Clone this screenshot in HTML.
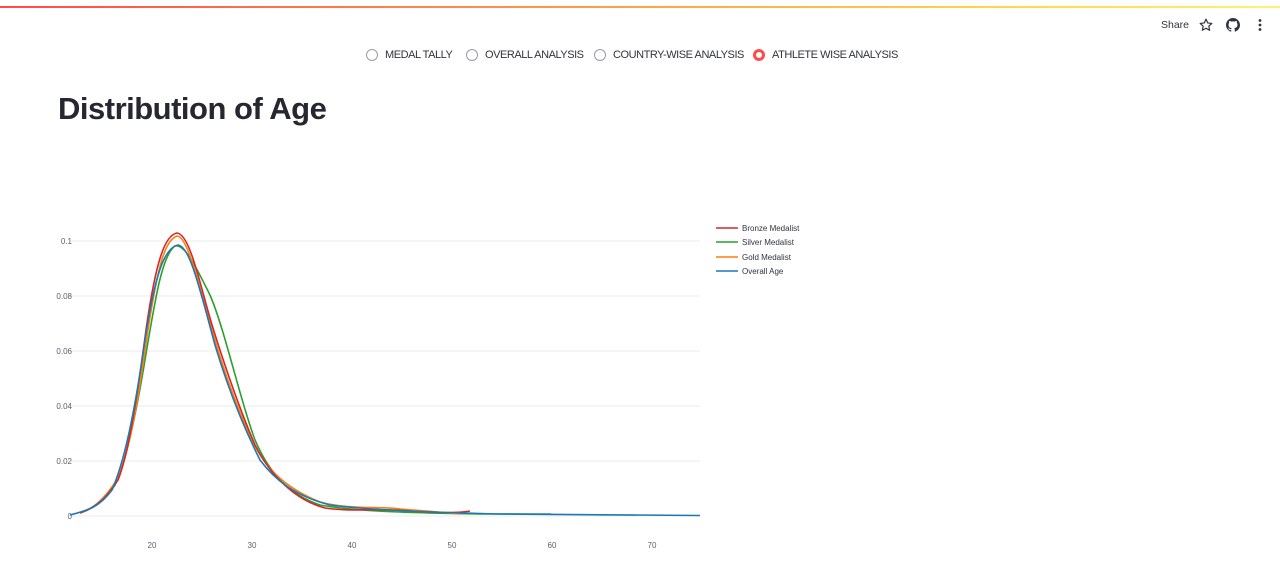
<!DOCTYPE html>
<html><head><meta charset="utf-8"><style>
body{margin:0;width:1280px;height:572px;background:#fff;font-family:"Liberation Sans",sans-serif;position:relative;overflow:hidden;color:#31333f}
.bar{position:absolute;top:6px;left:0;width:1280px;height:2px;background:linear-gradient(90deg,#ff4b4b,#ffd84b 80%,#fff176)}
.r{position:absolute;top:49px;font-size:11px;letter-spacing:-0.45px;display:flex;align-items:center;white-space:nowrap;color:#31333f}
.c{width:12px;height:12px;border:1px solid #9a9ca4;border-radius:50%;margin-right:7px;box-sizing:border-box}
.c.on{border:3.5px solid #ff4b4b;background:#fff}
h1{position:absolute;top:91px;left:58px;margin:0;font-size:31px;font-weight:bold;color:#262730;letter-spacing:-0.5px}
.tr{position:absolute;top:19px;font-size:10.5px;color:#31333f}
</style></head><body>
<div class="bar"></div>
<div class="tr" style="left:1161px">Share</div>
<svg style="position:absolute;left:1199px;top:18px" width="14" height="14" viewBox="0 0 24 24"><path d="M12 2l3 6.5 7 .8-5.2 4.8 1.5 7L12 17.6 5.7 21l1.5-7L2 9.3l7-.8z" fill="none" stroke="#31333f" stroke-width="2" stroke-linejoin="round"/></svg>
<svg style="position:absolute;left:1226px;top:18px" width="14" height="14" viewBox="0 0 16 16"><path fill="#31333f" d="M8 0C3.6 0 0 3.6 0 8c0 3.5 2.3 6.5 5.5 7.6.4.1.5-.2.5-.4v-1.4c-2.2.5-2.7-1-2.7-1-.4-.9-.9-1.2-.9-1.2-.7-.5.1-.5.1-.5.8.1 1.2.8 1.2.8.7 1.2 1.9.9 2.3.7.1-.5.3-.9.5-1.1-1.8-.2-3.6-.9-3.6-4 0-.9.3-1.6.8-2.1-.1-.2-.4-1 .1-2.1 0 0 .7-.2 2.2.8.6-.2 1.3-.3 2-.3s1.4.1 2 .3c1.5-1 2.2-.8 2.2-.8.4 1.1.2 1.9.1 2.1.5.6.8 1.3.8 2.1 0 3.1-1.9 3.7-3.6 3.9.3.3.5.8.5 1.5v2.2c0 .2.1.5.6.4C13.7 14.5 16 11.5 16 8c0-4.4-3.6-8-8-8z"/></svg>
<svg style="position:absolute;left:1257px;top:18px" width="6" height="14"><circle cx="3" cy="2.5" r="1.4" fill="#31333f"/><circle cx="3" cy="7" r="1.4" fill="#31333f"/><circle cx="3" cy="11.5" r="1.4" fill="#31333f"/></svg>
<div class="r" style="left:366px"><div class="c"></div>MEDAL TALLY</div>
<div class="r" style="left:466px"><div class="c"></div>OVERALL ANALYSIS</div>
<div class="r" style="left:594px"><div class="c"></div>COUNTRY-WISE ANALYSIS</div>
<div class="r" style="left:753px"><div class="c on"></div>ATHLETE WISE ANALYSIS</div>
<h1>Distribution of Age</h1>
<svg style="position:absolute;left:0;top:0" width="1280" height="572" font-family="Liberation Sans, sans-serif" font-size="8" fill="#5c6070">
<g stroke="#ebebeb" stroke-width="1">
<line x1="70" x2="700" y1="241" y2="241"/><line x1="70" x2="700" y1="296" y2="296"/><line x1="70" x2="700" y1="351" y2="351"/><line x1="70" x2="700" y1="406" y2="406"/><line x1="70" x2="700" y1="461" y2="461"/><line x1="70" x2="700" y1="516" y2="516"/>
</g>
<g text-anchor="end"><text x="72" y="244">0.1</text><text x="72" y="299">0.08</text><text x="72" y="354">0.06</text><text x="72" y="409">0.04</text><text x="72" y="464">0.02</text><text x="72" y="519">0</text></g>
<g text-anchor="middle"><text x="152" y="548">20</text><text x="252" y="548">30</text><text x="352" y="548">40</text><text x="452" y="548">50</text><text x="552" y="548">60</text><text x="652" y="548">70</text></g>
<g fill="none" stroke-width="1.6">
<path stroke="#2ca02c" d="M80 513 C95 508 105 500 115 485 C125 465 135 420 145 360 C155 300 162 255 175 246 C185 244 195 265 210 295 C225 330 240 400 255 440 C270 475 290 495 320 505 C360 512 420 513 480 514 C520 514 540 514 551 514"/>
<path stroke="#ff7f0e" d="M80 513 C95 508 105 498 118 478 C130 450 138 400 148 330 C158 265 165 240 177 236 C188 236 200 290 212 330 C225 375 238 410 252 440 C265 468 285 488 320 502 C350 510 380 506 400 509 C430 511 450 513 460 514"/>
<path stroke="#d62728" d="M80 513 C95 508 105 500 118 480 C128 455 136 405 146 330 C156 260 165 235 177 233 C190 234 200 285 212 325 C226 370 240 410 255 445 C270 475 295 500 325 508 C350 512 380 508 410 511 C440 513 460 513 470 511"/>
<path stroke="#1f77b4" d="M70 515 C90 510 100 506 112 490 C125 460 135 410 145 340 C155 275 164 248 178 245 C190 246 200 290 215 345 C230 395 245 430 260 460 C275 480 295 496 330 505 C370 510 420 512 500 514 C580 515 640 515 700 515.5"/>
</g>
<g font-size="8" fill="#31333f">
<line x1="716" x2="738" y1="228" y2="228" stroke="#d62728" stroke-width="1.6"/><text x="742" y="231">Bronze Medalist</text>
<line x1="716" x2="738" y1="242" y2="242" stroke="#2ca02c" stroke-width="1.6"/><text x="742" y="245">Silver Medalist</text>
<line x1="716" x2="738" y1="257" y2="257" stroke="#ff7f0e" stroke-width="1.6"/><text x="742" y="260">Gold Medalist</text>
<line x1="716" x2="738" y1="271" y2="271" stroke="#1f77b4" stroke-width="1.6"/><text x="742" y="274">Overall Age</text>
</g>
</svg>
</body></html>
